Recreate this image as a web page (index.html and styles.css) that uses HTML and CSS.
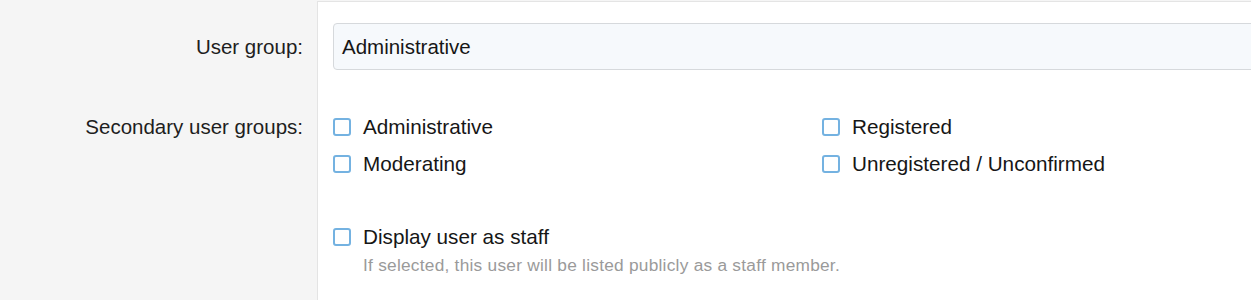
FILE: index.html
```html
<!DOCTYPE html>
<html>
<head>
<meta charset="utf-8">
<link rel="stylesheet" href="styles.css">
</head>
<body>
<div class="form">
  <div class="row row-first">
    <div class="label label-select">User group:</div>
    <div class="control control-first">
      <div class="select">Administrative</div>
    </div>
  </div>
  <div class="row">
    <div class="label label-checks">Secondary user groups:</div>
    <div class="control control-checks">
      <div class="check-grid">
        <label class="check"><span class="box"></span><span>Administrative</span></label>
        <label class="check"><span class="box"></span><span>Registered</span></label>
        <label class="check"><span class="box"></span><span>Moderating</span></label>
        <label class="check"><span class="box"></span><span>Unregistered / Unconfirmed</span></label>
      </div>
    </div>
  </div>
  <div class="row row-last">
    <div class="label"></div>
    <div class="control control-staff">
      <label class="check"><span class="box"></span><span>Display user as staff</span></label>
      <div class="hint">If selected, this user will be listed publicly as a staff member.</div>
    </div>
  </div>
</div>
</body>
</html>
```

FILE: styles.css
```css
html, body {
  margin: 0;
  padding: 0;
  background: #f5f5f5;
  font-family: "Liberation Sans", Arial, sans-serif;
  color: #161616;
  overflow: hidden;
}

.form {
  padding-top: 1px;
  height: 299px;
  display: flex;
  flex-direction: column;
}

.row {
  display: grid;
  grid-template-columns: 317px 1fr;
}

.row-last {
  flex: 1;
}

.label {
  font-size: 20.5px;
  text-align: right;
  padding-right: 14px;
  color: #1e1e1e;
}

.label-select {
  padding-top: 22px;
  line-height: 47px;
}

.label-checks {
  padding-top: 38px;
  line-height: 37px;
}

.control {
  background: #fff;
  border-left: 1px solid #e4e4e4;
  padding-left: 15px;
  min-width: 0;
  overflow: hidden;
}

.control-first {
  border-top: 1px solid #e4e4e4;
  padding-top: 21px;
}

.select {
  height: 45px;
  width: 1000px;
  border: 1px solid #d6d9dc;
  border-radius: 4px;
  background: #f6f9fc;
  font-size: 20.5px;
  line-height: 45px;
  padding-left: 8px;
}

.control-checks {
  padding-top: 38px;
}

.check-grid {
  display: grid;
  grid-template-columns: 489px 489px;
}

.check {
  display: flex;
  align-items: center;
  height: 37px;
  font-size: 20.7px;
  line-height: 37px;
  gap: 12px;
}

.box {
  width: 14px;
  height: 14px;
  border: 2px solid #74b2e1;
  border-radius: 3px;
  background: #fff;
  flex: none;
  box-sizing: content-box;
}

.control-staff {
  padding-top: 36px;
}

.hint {
  font-size: 17.3px;
  letter-spacing: 0.25px;
  line-height: 20px;
  color: #9a9a9a;
  padding-left: 30px;
}
```
